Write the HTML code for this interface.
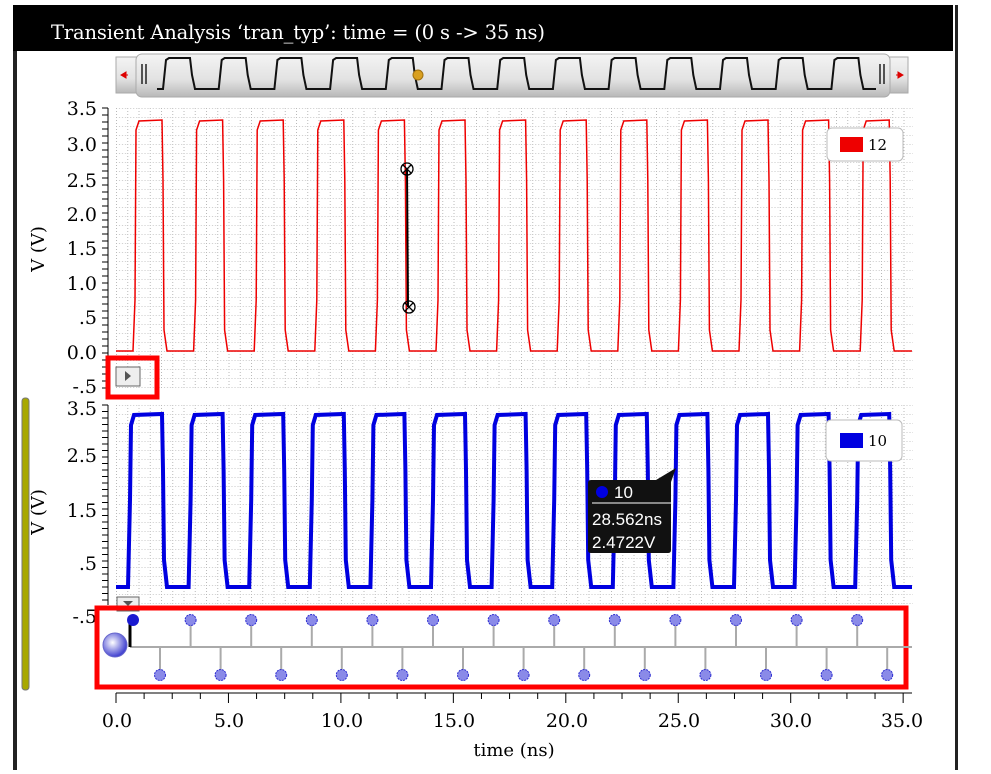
<!DOCTYPE html>
<html><head><meta charset="utf-8"><style>
html,body{margin:0;padding:0;background:#fff;}
svg{display:block;font-family:"DejaVu Serif","Liberation Serif",serif;}
</style></head><body>
<svg id="s" width="991" height="774" viewBox="0 0 991 774" xmlns="http://www.w3.org/2000/svg">
<defs>
<pattern id="g" x="116" y="0" width="11.25" height="9" patternUnits="userSpaceOnUse">
<rect x="0" y="0" width="1" height="1" fill="#b8b8b8"/><rect x="0" y="3" width="1" height="1" fill="#b8b8b8"/><rect x="0" y="6" width="1" height="1" fill="#b8b8b8"/>
<rect x="3" y="0" width="1" height="1" fill="#c8c8c8"/><rect x="6" y="0" width="1" height="1" fill="#c8c8c8"/><rect x="9" y="0" width="1" height="1" fill="#c8c8c8"/>
</pattern>
<linearGradient id="sb" x1="0" y1="0" x2="0" y2="1"><stop offset="0" stop-color="#f4f4f4"/><stop offset="0.6" stop-color="#e2e2e2"/><stop offset="1" stop-color="#b8b8b8"/></linearGradient>
<radialGradient id="ball" cx="0.4" cy="0.4" r="0.6"><stop offset="0" stop-color="#fff"/><stop offset="1" stop-color="#4040d0"/></radialGradient>
</defs>
<rect width="991" height="774" fill="#fff"/>
<rect x="13" y="5" width="4" height="765" fill="#222"/>
<rect x="955" y="5" width="3" height="765" fill="#222"/>
<rect x="13" y="5" width="940" height="46" fill="#000"/>
<text x="51" y="39" fill="#fff" font-size="19.5" textLength="494">Transient Analysis ‘tran_typ’: time = (0 s -&gt; 35 ns)</text>
<rect x="22" y="398" width="7" height="292" rx="3" fill="#a8a800" stroke="#777" stroke-width="1"/>
<!-- scrollbar -->
<rect x="116" y="57" width="24" height="36" fill="url(#sb)" stroke="#aaa"/>
<rect x="880" y="57" width="28" height="36" fill="url(#sb)" stroke="#aaa"/>
<rect x="136" y="54" width="754" height="43" rx="6" fill="url(#sb)" stroke="#aaa"/>
<path d="M121 75 l5 -3 v6 z M125 75 h3" fill="#d00" stroke="#d00"/>
<path d="M903 75 l-5 -3 v6 z M899 75 h-3" fill="#d00" stroke="#d00"/>
<path d="M142 64 v20 M146 64 v20 M880 64 v20 M884 64 v20" stroke="#222" stroke-width="1.5"/>
<path id="mini" fill="none" stroke="#111" stroke-width="2"/>
<circle cx="418" cy="75" r="5" fill="#d9a020" stroke="#a07010"/>
<!-- plots -->
<rect x="116" y="107" width="797" height="283" fill="url(#g)"/>
<rect x="116" y="405" width="797" height="200" fill="url(#g)"/>
<path id="red" fill="none" stroke="#e00" stroke-width="1.5"/>
<path id="blue" fill="none" stroke="#0000e0" stroke-width="4"/>
<path id="axes" fill="none" stroke="#000" stroke-width="1"/>
<g font-size="19" fill="#000" text-anchor="end">
<text x="97" y="115">3.5</text><text x="97" y="151">3.0</text><text x="97" y="187">2.5</text><text x="97" y="221">2.0</text><text x="97" y="255">1.5</text><text x="97" y="290">1.0</text><text x="97" y="324">.5</text><text x="97" y="359">0.0</text><text x="97" y="393">-.5</text>
<text x="97" y="415">3.5</text><text x="97" y="462">2.5</text><text x="97" y="517">1.5</text><text x="97" y="570">.5</text><text x="97" y="623">-.5</text>
</g>
<text transform="translate(44,249) rotate(-90)" font-size="18" text-anchor="middle">V (V)</text>
<text transform="translate(44,512) rotate(-90)" font-size="18" text-anchor="middle">V (V)</text>
<!-- cursor -->
<line x1="407" y1="169" x2="408" y2="307" stroke="#000" stroke-width="2"/>
<g fill="none" stroke="#000" stroke-width="1.3"><circle cx="407" cy="169" r="6"/><path d="M403 165 l8 8 M411 165 l-8 8"/><circle cx="409" cy="307" r="6"/><path d="M405 303 l8 8 M413 303 l-8 8"/></g>
<!-- legends -->
<rect x="827" y="128" width="76" height="33" rx="5" fill="#fff" stroke="#bbb"/><rect x="840" y="137" width="23" height="15" fill="#e00"/><text x="868" y="150" font-size="15">12</text>
<rect x="826" y="420" width="76" height="41" rx="5" fill="#fff" stroke="#bbb"/><rect x="840" y="433" width="23" height="15" fill="#0000e0"/><text x="868" y="446" font-size="15">10</text>
<!-- small box -->
<rect x="108" y="358" width="49" height="39" fill="none" stroke="#f00" stroke-width="5"/>
<rect x="116" y="367" width="24" height="19" fill="#eee" stroke="#666"/><path d="M125 371 l6 5 l-6 5z" fill="#555"/>
<rect x="117" y="597" width="22" height="14" fill="#eee" stroke="#666"/><path d="M123 601 l5 5 l5 -5z" fill="#555"/>
<!-- tooltip -->
<path d="M591 480 h65 l20 -12 l-5 14 v68 q0 3 -3 3 h-77 q-3 0 -3 -3 v-67 q0 -3 3 -3z" fill="#111"/>
<circle cx="602" cy="492" r="6" fill="#0000e0"/>
<line x1="592" y1="503" x2="672" y2="503" stroke="#fff"/>
<g fill="#fff" font-family="Liberation Sans,sans-serif" font-size="17"><text x="614" y="498">10</text><text x="592" y="525">28.562ns</text><text x="592" y="548">2.4722V</text></g>
<!-- bus -->
<rect x="97" y="608" width="809" height="79" fill="none" stroke="#f00" stroke-width="5"/>
<line x1="130" y1="647" x2="912" y2="647" stroke="#aaa" stroke-width="2"/>
<g id="bus"></g>
<line x1="130" y1="620" x2="130" y2="647" stroke="#000" stroke-width="3"/>
<circle cx="133" cy="620" r="6" fill="#1a1ad0"/>
<circle cx="115" cy="645" r="12" fill="url(#ball)" stroke="#66c"/>
<g font-size="19" text-anchor="middle"><text x="117" y="727">0.0</text><text x="229" y="727">5.0</text><text x="342" y="727">10.0</text><text x="454" y="727">15.0</text><text x="567" y="727">20.0</text><text x="679" y="727">25.0</text><text x="791" y="727">30.0</text><text x="902" y="727">35.0</text><text x="514" y="756" font-size="18">time (ns)</text></g>
</svg>
<script>
var P=60.6,d='',b='',m='',a='',k,r,f;
d='M116 351';for(k=0;k<13;k++){r=135+P*k;f=163+P*k;if(r>912)break;d+=' L'+(r-2)+' 351 L'+r+' 300 L'+(r+1)+' 130 L'+(r+4)+' 121 L'+(f-1)+' 120 L'+f+' 180 L'+(f+1)+' 330 L'+(f+4)+' 351';}d+=' L912 351';
document.getElementById('red').setAttribute('d',d);
b='M116 587';for(k=0;k<13;k++){r=130+P*k;f=163+P*k;if(r>912)break;b+=' L'+(r-2)+' 587 L'+r+' 500 L'+(r+1)+' 425 L'+(r+4)+' 415 L'+(f-1)+' 414 L'+f+' 470 L'+(f+1)+' 560 L'+(f+4)+' 587';}b+=' L912 587';
document.getElementById('blue').setAttribute('d',b);
var Q=55.7;m='M157 89';for(k=0;k<13;k++){r=163+Q*k;if(r>870)break;var e=Math.min(r+32,876);m+=' L'+r+' 89 L'+(r+3)+' 60 L'+(r+6)+' 58 L'+(r+27)+' 58 L'+(r+29)+' 75 L'+e+' 89';}m+=' L876 89';
document.getElementById('mini').setAttribute('d',m);
a='M108 108 V390 M108 405 V605 M116 693 H912';
for(var y=108;y<=390;y+=7)a+=' M102 '+y+' H108';
for(y=405;y<=605;y+=6.5)a+=' M102 '+y+' H108';
for(var i=0;i<=35;i+=1.25){var x=116+i*22.49;a+=' M'+x+' 693 V'+(i%5==0?703:699);}
document.getElementById('axes').setAttribute('d',a);
var g='';for(k=1;k<13;k++){x=130+P*k;g+='<line x1="'+x+'" y1="622" x2="'+x+'" y2="647" stroke="#aaa" stroke-width="2"/><circle cx="'+x+'" cy="620" r="5.5" fill="#8a8ae8" stroke="#2a2ad0" stroke-dasharray="2 1"/>';}
for(k=0;k<13;k++){x=160+P*k;g+='<line x1="'+x+'" y1="647" x2="'+x+'" y2="673" stroke="#aaa" stroke-width="2"/><circle cx="'+x+'" cy="675" r="5.5" fill="#8a8ae8" stroke="#2a2ad0" stroke-dasharray="2 1"/>';}
document.getElementById('bus').innerHTML=g;
</script>
</body></html>
